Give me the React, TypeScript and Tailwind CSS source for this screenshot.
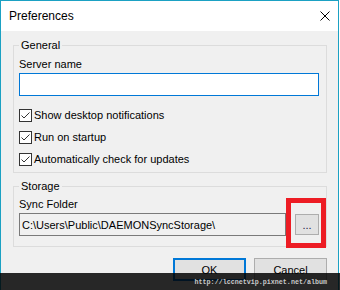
import React from "react";

const CheckRow = ({ label }: { label: string }) => (
  <label className="flex items-center h-[22px] gap-[2px]">
    <span className="flex items-center justify-center w-[13px] h-[13px] border border-[#333333] bg-white">
      <svg width="11" height="11" viewBox="0 0 11 11">
        <polyline points="1.5,5.5 4,8 9.5,2.5" fill="none" stroke="#333333" strokeWidth="1" />
      </svg>
    </span>
    <span>{label}</span>
  </label>
);

export default function App() {
  return (
    <div className="relative w-[340px] h-[290px] bg-white overflow-hidden font-['Liberation_Sans',Arial,sans-serif] text-black">
      <div className="flex flex-col w-[339px] h-[290px] border-x border-t border-[#1ba1c3]">
        {/* title bar */}
        <div className="flex items-center justify-between h-[30px] bg-white pl-[8px] pr-[8px]">
          <span className="text-[12px] leading-[14px]">Preferences</span>
          <svg width="10" height="10" viewBox="0 0 10 10">
            <path d="M0.5 0.5 L9.5 9.5 M9.5 0.5 L0.5 9.5" stroke="#000" strokeWidth="1" fill="none" />
          </svg>
        </div>

        <div className="flex-1 bg-[#f0f0f0] pt-[7px] text-[11px] leading-[14px]">
          <fieldset className="ml-[12px] w-[314px] border border-[#dcdcdc] pl-[5px] pr-[7px] pt-[5px] pb-[2px]">
            <legend className="px-[2px] text-[11px] leading-[14px]">General</legend>
            <div>Server name</div>
            <input
              className="block mt-[2px] w-full h-[23px] border border-[#0078d7] bg-white outline-none px-[2px]"
              defaultValue=""
            />
            <div className="mt-[8px]">
              <CheckRow label="Show desktop notifications" />
              <CheckRow label="Run on startup" />
              <CheckRow label="Automatically check for updates" />
            </div>
          </fieldset>

          <fieldset className="mt-[6px] ml-[12px] w-[314px] border border-[#dcdcdc] pl-[5px] pr-[7px] pt-[4px] pb-[10px]">
            <legend className="px-[2px] text-[11px] leading-[14px]">Storage</legend>
            <div>Sync Folder</div>
            <div className="flex items-center gap-[9px] mt-[2px]">
              <input
                readOnly
                className="block flex-1 min-w-0 h-[23px] border border-[#7a7a7a] bg-[#f0f0f0] outline-none px-[2px] text-[11px]"
                value="C:\Users\Public\DAEMONSyncStorage\"
              />
              <button className="w-[24px] h-[21px] border border-[#adadad] bg-[#e1e1e1] text-[11px] leading-[14px] text-[#1a1a40]">
                ...
              </button>
            </div>
          </fieldset>

          <div className="flex justify-end gap-[8px] mt-[11px] pr-[11px]">
            <button className="w-[73px] h-[23px] border-2 border-[#0078d7] bg-[#e1e1e1] text-[11px]">OK</button>
            <button className="w-[73px] h-[23px] border border-[#adadad] bg-[#e1e1e1] text-[11px]">Cancel</button>
          </div>
        </div>
      </div>

      {/* annotation highlight */}
      <div className="absolute left-[286px] top-[198px] w-[40px] h-[50px] border-[5px] border-[#ed1c24]" />

      {/* watermark strip */}
      <div className="absolute left-0 right-0 bottom-0 h-[17px] bg-black/[0.84] flex items-center justify-end pr-[13px]">
        <span className="font-['Liberation_Mono',monospace] text-[6.7px] leading-[8px] font-bold text-[#c8c8c8]">
          http://lccnetvip.pixnet.net/album
        </span>
      </div>
    </div>
  );
}
